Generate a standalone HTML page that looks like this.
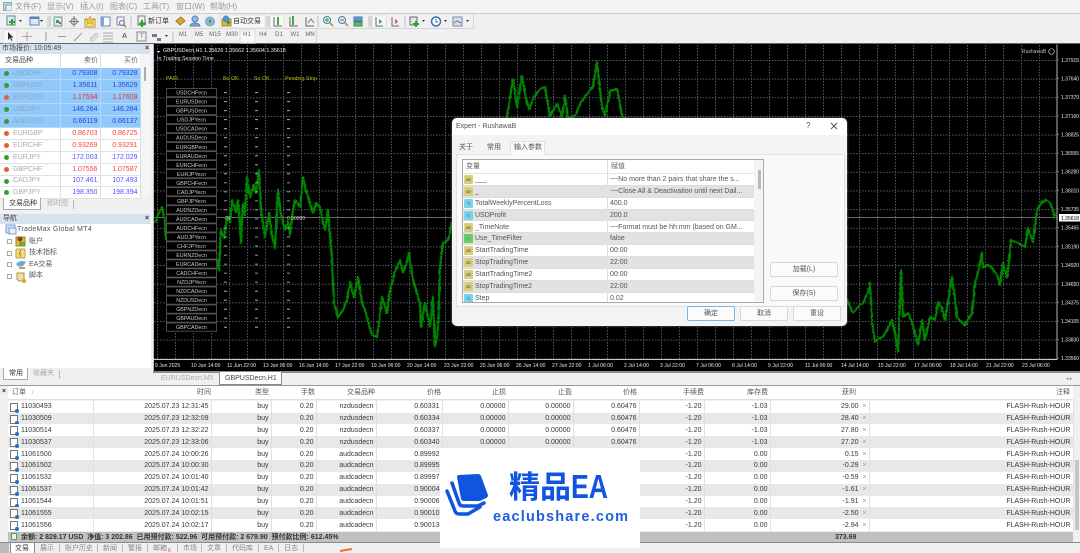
<!DOCTYPE html>
<html><head><meta charset="utf-8"><style>
html,body{margin:0;padding:0;width:1080px;height:553px;overflow:hidden;background:#f0f0f0}
#w{position:relative;width:1080px;height:553px;overflow:hidden;background:#f0f0f0;font:7px "Liberation Sans","Noto Sans CJK SC",sans-serif;color:#333;filter:blur(.3px)}
.a{position:absolute;white-space:nowrap}
.b{position:absolute}
table{position:absolute;border-collapse:collapse;table-layout:fixed;font-size:7px}
td{padding:0 1px;overflow:hidden;white-space:nowrap;text-align:right;box-sizing:border-box}
#mw td{height:11.9px;border-right:1px solid #ddd;border-bottom:1px solid #e2e2e2;padding:0 2px}
#mw td:first-child{text-align:left;color:#aaa;padding-left:13px;position:relative}
#mw tr.s td{background:#91c9fa;border-color:#b5d9f8}
#mw tr.s td:first-child{color:#8fa5bd}
.bl td{color:#5050ff}.re td{color:#ff4040}
.s.bl td{color:#2046e0}.s.re td{color:#f03030}
.ar{position:absolute;left:4px;top:3px;width:5px;height:5px;border-radius:50%;background:#3a9a3a}
.re .ar{background:#e0602a}
#tt td{height:11.87px;color:#383838;border-right:1px solid #e0e0e0;padding-right:2px}
#tt tr:nth-child(even) td{background:#e8e8e8}
#tt td:first-child{text-align:left;padding-left:13px;position:relative}
.doc{position:absolute;left:2px;top:2px;width:6px;height:7px;border:1px solid #777;background:#fff}
.doc:after{content:"";position:absolute;right:-2px;bottom:-2px;width:4px;height:4px;border-radius:50%;background:#1f72c8}
.hd{position:absolute;top:388px;line-height:10px;color:#555;transform:translateX(-100%);white-space:nowrap}
#dl{position:absolute;left:452px;top:118px;width:395px;height:208px;background:#f3f3f3;border-radius:5px;box-shadow:0 0 2px #777;overflow:hidden}
#pl{position:absolute;left:462px;top:159px;width:302px;height:144px;background:#fff;border:1px solid #a8a8a8;box-sizing:border-box;overflow:hidden}
.r{position:absolute;left:0;width:291px;height:11.87px;line-height:11.8px;color:#555;border-bottom:1px solid #ddd;box-sizing:border-box}
.r.g{background:#e2e2e2}
.r i{position:absolute;left:1px;top:1px;width:9px;height:9px;border-radius:1px;font:normal 4.5px/9px "Liberation Sans",sans-serif;text-align:center;color:#555}
.r .y{background:#d9cf78}.r .c{background:#78d2ea}.r .n{background:#66cc66}
.r span{position:absolute;left:12px}.r b{font-weight:normal;position:absolute;left:147px}
.btn{position:absolute;background:#fbfbfb;border:1px solid #d8d8d8;border-radius:2px;box-sizing:border-box;text-align:center;color:#555;font-size:7px;line-height:14px}
.t{position:absolute;top:544px;line-height:9px;color:#888}
.sp{position:absolute;top:544px;height:8px;width:1px;background:#bbb}
.m{position:absolute;top:7px;color:#999;font-size:8px;line-height:12px;transform:translateY(-6px)}
.tb{position:absolute;top:32px;color:#666;font-size:6px;width:14px;text-align:center}
</style></head><body><div id="w">

<div class="b" style="left:0;top:0;width:1080px;height:13px;background:#f3f3f3"></div>
<svg class="b" style="left:3px;top:2px" width="9" height="9"><rect x=".5" y=".5" width="8" height="8" fill="#bcd3ea" stroke="#8aa"/><rect x="3" y="3" width="6" height="6" fill="#e8f0f8" stroke="#8aa"/></svg>
<span class="m" style="left:15px">文件(F)</span><span class="m" style="left:47px">显示(V)</span><span class="m" style="left:80px">插入(I)</span><span class="m" style="left:110px">图表(C)</span><span class="m" style="left:143px">工具(T)</span><span class="m" style="left:176px">窗口(W)</span><span class="m" style="left:210px">帮助(H)</span>

<div class="b" style="left:0;top:13px;width:1080px;height:1px;background:#cfcfcf"></div>
<div class="b" style="left:0;top:28px;width:473px;height:1px;background:#d5d5d5"></div>
<div class="b" style="left:473px;top:14px;width:1px;height:15px;background:#d5d5d5"></div>
<div class="b" style="left:316px;top:29px;width:1px;height:14px;background:#d5d5d5"></div>
<div class="b" style="left:0;top:43px;width:1080px;height:1px;background:#666"></div>

<svg class="b" style="left:0;top:14px" width="480" height="30" fill="none" stroke-width="1">
<g fill="#f8f8f8" stroke="#e0e0e0"><rect x="51" y="1" width="14" height="13"/><rect x="98" y="1" width="14" height="13"/><rect x="220" y="1" width="45" height="13"/><rect x="270" y="1" width="14" height="13"/><rect x="372" y="1" width="14" height="13"/><rect x="3" y="16" width="14" height="13"/><rect x="240" y="16" width="15" height="13"/></g>
<g stroke="#c0c0c0"><path d="M48 2V13M50 2V13M131 2V13M267 2V13M269 2V13M318 2V13M369 2V13M371 2V13M405 2V13M173 17V28"/></g>
<g fill="#333"><path d="M19 6h3l-1.500 2zM40 6h3l-1.500 2zM422 6h3l-1.500 2zM444 6h3l-1.500 2zM466 6h3l-1.500 2zM165 21h3l-1.500 2z"/></g>
<rect x="7" y="2" width="8" height="9" fill="#dfe9f5" stroke="#6a7f99"/><path d="M12 5v6M9 8h6" stroke="#22aa22" stroke-width="2"/>
<rect x="30" y="3" width="9" height="8" fill="#dfe9f5" stroke="#5c82b5"/><rect x="30" y="3" width="9" height="2" fill="#5c82b5"/>
<rect x="54" y="3" width="8" height="9" fill="#e0f0e0" stroke="#6a8a9a"/><rect x="56" y="6" width="3" height="3" fill="#22aa44"/><rect x="59" y="8" width="2" height="2" fill="#dd4422"/>
<path d="M74 2V13M69 7.500H79" stroke="#777"/><circle cx="74" cy="7.500" r="3" stroke="#777"/>
<path d="M85 5h10v8H85z" fill="#f5e08a" stroke="#b09a40"/><path d="M90 2l1.500 3 3 .5-2 2 .5 3-3-1.500-3 1.500.5-3-2-2 3-.5z" fill="#f0c830" stroke="#b09030" stroke-width=".5"/>
<rect x="101" y="3" width="9" height="9" fill="#fff" stroke="#5c82b5"/><rect x="101" y="3" width="3" height="9" fill="#7da8d8"/>
<rect x="117" y="3" width="7" height="8" fill="#eef" stroke="#88a"/><circle cx="122" cy="9" r="2.500" stroke="#777"/><path d="M124 11l2 2" stroke="#a08030" stroke-width="1.500"/>
<rect x="138" y="2" width="7" height="9" fill="#eee" stroke="#778"/><path d="M142 6v7M139 9.500h7" stroke="#22aa22" stroke-width="2"/>
<path d="M176 7l5-4 4 4-5 4z" fill="#d8a830" stroke="#a07820"/>
<circle cx="195" cy="5" r="3" fill="#8fb8e6" stroke="#5a80b0"/><path d="M190 12c1-4 9-4 10 0z" fill="#7da8d8" stroke="#5a80b0"/>
<circle cx="210" cy="7.500" r="4.500" fill="#8fb8d8" stroke="#78a0c0"/><path d="M209 5l3 2-3 3" fill="#4aa04a"/>
<rect x="222" y="5" width="9" height="7" fill="#e0b040" stroke="#b08820"/><circle cx="226" cy="5" r="3.500" fill="#5a90c8"/><path d="M227 6v5l4-2.500z" fill="#22aa22"/>
<g stroke="#667"><path d="M274 3v9h8"/><path d="M290 3v9h8"/><path d="M306 3v9h8"/></g><path d="M278 3v8M293 2v9" stroke="#44aa44" stroke-width="2"/><path d="M308 9l3-4 3 4" stroke="#668a66"/>
<g fill="#dcecf8" stroke="#4a80b0"><circle cx="327" cy="6" r="3.500"/><circle cx="342" cy="6" r="3.500"/></g><path d="M330 9l3 3M345 9l3 3" stroke="#b08830" stroke-width="1.500"/><path d="M325 6h4M327 4v4" stroke="#22aa22"/><path d="M340 6h4" stroke="#dd4433"/>
<rect x="354" y="3" width="8" height="4" fill="#5a9adf" stroke="#4a7ab0"/><rect x="354" y="8" width="8" height="4" fill="#5abf6a" stroke="#3a8a4a"/>
<path d="M376 3v9h7M392 3v9h7" stroke="#667"/><path d="M379 5v5l3-2.500z" fill="#33aa33"/><path d="M395 5v5l3-2.500z" fill="#dd5533"/>
<rect x="410" y="3" width="7" height="8" fill="#e4e4e4" stroke="#667"/><path d="M416 7v6M413 10h6" stroke="#22aa22" stroke-width="2"/>
<circle cx="436" cy="7.500" r="4.500" fill="#fff" stroke="#2a70c0" stroke-width="1.500"/><path d="M436 5v3h2" stroke="#333" stroke-width=".7"/>
<rect x="453" y="3" width="9" height="9" fill="#cfe0f4" stroke="#6a90c0"/><path d="M454 9l3-2 4 2" stroke="#d06030"/>
<path d="M8 18v8l2-2 1.500 3 1-.5-1.500-3h2.500z" fill="#333"/><path d="M27 18v9M22 22.500h10" stroke="#aaa"/>
<path d="M46 18v9" stroke="#999"/><path d="M58 22.500h8" stroke="#999"/><path d="M74 27l8-8" stroke="#999"/>
<path d="M90 27l8-8M92 28l6-6M90 25l6-6" stroke="#999" stroke-dasharray="1 1"/><path d="M103 19h10M103 22h10M103 25h10M103 28h10" stroke="#aaa"/>
<rect x="137" y="18" width="9" height="9" stroke="#888"/><path d="M152 20h5v3h-5zM157 24h4v3h-4z" fill="#778"/>
</svg>
<span class="a" style="left:148px;top:17px;color:#333;font-size:7px;line-height:9px">新订单</span>
<span class="a" style="left:233px;top:17px;color:#333;font-size:7px;line-height:9px">自动交易</span>
<span class="a" style="left:122px;top:33px;color:#666;font-weight:bold;line-height:8px">A</span>
<span class="a" style="left:140px;top:33px;color:#666;font-size:6px;line-height:8px">T</span>
<span class="tb" style="left:176px">M1</span><span class="tb" style="left:192px">M5</span><span class="tb" style="left:208px">M15</span><span class="tb" style="left:225px">M30</span><span class="tb" style="left:240px">H1</span><span class="tb" style="left:256px">H4</span><span class="tb" style="left:272px">D1</span><span class="tb" style="left:288px">W1</span><span class="tb" style="left:303px">MN</span>

<!-- Market watch -->
<div class="b" style="left:0;top:44px;width:150px;height:10px;background:#d6e2ee"></div>
<span class="a" style="left:2px;top:45px;line-height:8px;color:#444">市场报价: 10:05:49</span>
<span class="a" style="left:145px;top:45px;line-height:8px;color:#333;font-weight:bold">×</span>
<div class="b" style="left:0;top:54px;width:150px;height:144px;background:#f4f4f4"></div>
<div class="b" style="left:0;top:54px;width:140px;height:14px;background:#fff"></div>
<span class="a" style="left:5px;top:57px;line-height:8px;color:#444">交易品种</span><span class="a" style="left:84px;top:57px;line-height:8px;color:#666">卖价</span><span class="a" style="left:124px;top:57px;line-height:8px;color:#666">买价</span>
<div class="b" style="left:60px;top:54px;width:1px;height:14px;background:#ddd"></div><div class="b" style="left:100px;top:54px;width:1px;height:14px;background:#ddd"></div>
<div class="b" style="left:144px;top:67px;width:2px;height:14px;background:#aaa"></div>
<table id="mw" style="left:0;top:68px;width:140px;background:#fff"><colgroup><col style="width:60px"><col style="width:40px"><col style="width:40px"></colgroup>
<tr class="s bl"><td><i class="ar"></i>USDCHF</td><td>0.79308</td><td>0.79328</td></tr>
<tr class="s bl"><td><i class="ar"></i>GBPUSD</td><td>1.35611</td><td>1.35629</td></tr>
<tr class="s re"><td><i class="ar"></i>EURUSD</td><td>1.17594</td><td>1.17609</td></tr>
<tr class="s bl"><td><i class="ar"></i>USDJPY</td><td>146.264</td><td>146.284</td></tr>
<tr class="s bl"><td><i class="ar"></i>AUDUSD</td><td>0.66119</td><td>0.66137</td></tr>
<tr class="re"><td><i class="ar"></i>EURGBP</td><td>0.86703</td><td>0.86725</td></tr>
<tr class="re"><td><i class="ar"></i>EURCHF</td><td>0.93269</td><td>0.93291</td></tr>
<tr class="bl"><td><i class="ar"></i>EURJPY</td><td>172.003</td><td>172.029</td></tr>
<tr class="re"><td><i class="ar"></i>GBPCHF</td><td>1.07556</td><td>1.07587</td></tr>
<tr class="bl"><td><i class="ar"></i>CADJPY</td><td>107.461</td><td>107.493</td></tr>
<tr class="bl"><td><i class="ar"></i>GBPJPY</td><td>198.350</td><td>198.394</td></tr>
</table>
<div class="b" style="left:3px;top:198px;width:38px;height:12px;background:#fff;border:1px solid #aaa;border-top:0;box-sizing:border-box"></div>
<span class="a" style="left:9px;top:200px;line-height:8px;color:#333">交易品种</span><span class="a" style="left:47px;top:200px;line-height:8px;color:#aaa">即时图</span>
<div class="b" style="left:73px;top:200px;width:1px;height:9px;background:#bbb"></div>

<!-- Navigator -->
<div class="b" style="left:0;top:214px;width:150px;height:10px;background:#d6e2ee"></div>
<span class="a" style="left:3px;top:215px;line-height:8px;color:#444">导航</span><span class="a" style="left:145px;top:215px;line-height:8px;font-weight:bold">×</span>
<div class="b" style="left:0;top:224px;width:151px;height:144px;background:#fff"></div>
<svg class="b" style="left:4px;top:224px" width="30" height="62" fill="none">
<rect x="2" y="1" width="9" height="8" fill="#cfe0f4" stroke="#7aa0cc"/><rect x="5" y="4" width="7" height="6" fill="#e8f0fa" stroke="#7aa0cc"/>
<g stroke="#aaa" fill="#fff"><rect x="3.500" y="15.500" width="4" height="4"/><rect x="3.500" y="27.500" width="4" height="4"/><rect x="3.500" y="38.500" width="4" height="4"/><rect x="3.500" y="50.500" width="4" height="4"/></g>
<rect x="12" y="13" width="9" height="9" fill="#e8b830" stroke="#a08020"/><circle cx="16" cy="15" r="2.500" fill="#6a5020"/><rect x="15" y="18" width="6" height="4" fill="#66aa44"/>
<rect x="12" y="25" width="9" height="9" rx="1" fill="#f0e080" stroke="#c0a040"/><path d="M17 26l-2 4h2l-1 3" stroke="#c08020"/>
<path d="M12 40c2-3 7-4 10-2l-3 4c-3 1-5 1-7-2z" fill="#6aa8e0"/><path d="M15 44h6" stroke="#d0a030" stroke-width="2"/>
<path d="M13 49h7v8h-5l-2-2z" fill="#f0e0a0" stroke="#b09050"/><circle cx="20" cy="57" r="2" fill="#d8a830"/>
</svg>
<span class="a" style="left:17px;top:225px;line-height:9px;color:#555;letter-spacing:.3px">TradeMax Global MT4</span>
<span class="a" style="left:29px;top:237px;line-height:9px;color:#555">账户</span><span class="a" style="left:29px;top:248px;line-height:9px;color:#555">技术指标</span><span class="a" style="left:29px;top:260px;line-height:9px;color:#555">EA交易</span><span class="a" style="left:29px;top:271px;line-height:9px;color:#555">脚本</span>
<div class="b" style="left:3px;top:368px;width:25px;height:12px;background:#fff;border:1px solid #aaa;border-top:0;box-sizing:border-box"></div>
<span class="a" style="left:9px;top:370px;line-height:8px;color:#333">常用</span><span class="a" style="left:33px;top:370px;line-height:8px;color:#aaa">收藏夹</span>
<div class="b" style="left:59px;top:370px;width:1px;height:9px;background:#bbb"></div>

<!-- Chart -->
<svg class="b" style="left:153px;top:44px;background:#000" width="927" height="327" viewBox="153 44 927 327" font-family="Liberation Sans" font-size="5.2" fill="#e8e8e8">
<defs>
<pattern id="v" patternUnits="userSpaceOnUse" x="157" y="45" width="18" height="3"><rect width="1" height="1.500" fill="#555b66"/></pattern>
<pattern id="h" patternUnits="userSpaceOnUse" x="157" y="60" width="3" height="18.640"><rect width="1.500" height="1" fill="#555b66"/></pattern>
<filter id="jag" filterUnits="userSpaceOnUse" x="153" y="44" width="910" height="327"><feTurbulence type="fractalNoise" baseFrequency=".4" numOctaves="2" seed="4"/><feDisplacementMap in="SourceGraphic" scale="2.500" xChannelSelector="R" yChannelSelector="G"/></filter>
</defs>
<rect x="154" y="45" width="903" height="314" fill="url(#v)"/><rect x="154" y="45" width="903" height="314" fill="url(#h)"/>
<rect x="153" y="44" width="1" height="327" fill="#bbb"/>
<path d="M154 217.500H1057" stroke="#8a8a8a" stroke-width=".8"/>
<g fill="none" stroke="#008400" stroke-width="2.300" stroke-linejoin="round" filter="url(#jag)">
<polyline points="155,223 158,215 162,207 165,222 166,240 168,225 172,240 180,235 190,240 200,245 217,260 219,270 221,230 224,238 227,217 230,222 232,200 236,212 238,200 240,225 241,243 243,203 245,215 247,177 250,197 254,185 256,193 259,170 261,210 265,237 267,225 269,213 272,235 275,248 278,190 281,215 285,230 288,222 290,235 293,210 295,200 300,207 303,177 306,190 308,197 313,213 316,203 320,207 323,222 325,230 328,210 332,260 334,303 338,317 343,310 347,300 350,282 354,297 358,277 362,303 365,310 367,317 370,328 372,335 377,337 380,315 382,297 387,313 390,290 395,272 400,260 403,273 406,265 409,253 413,280 420,303 421,327 425,303 430,327 433,297 435,347 438,330 440,267 443,243 448,240 452,223 470,200 490,170 507,116 513,79 517,107 522,76 526,98 529,109 534,97 540,89 545,87 550,116 557,104 562,116 565,96 568,118 575,116 581,102 587,94 593,87 597,62 602,107 605,116 610,91 617,89 622,116 700,210 800,280 847,300 850,307 853,313 858,307 863,303 868,292 870,283 872,323 875,342 879,338 883,337 888,328 892,320 895,333 898,352 901,270 903,317 908,313 912,322 915,333 918,345 922,320 925,340 930,317 935,320 938,302 942,308 945,320 949,295 952,277 955,300 957,317 961,322 965,325 972,313 975,283 979,268 982,253 983,267 988,265 992,268 997,275 1000,285 1003,263 1007,278 1011,240 1018,243 1025,247 1028,228 1033,242 1037,210 1042,202 1046,200 1050,202 1053,210 1055,218"/>
</g>
<path d="M1057 44.500V359.500H153" stroke="#c8c8c8" stroke-width=".9" fill="none"/>
<g stroke="#aaa" stroke-width=".6" fill="none"><path d="M1057 60h2M1057 78.700h2M1057 97h2M1057 116h2M1057 134.700h2M1057 153h2M1057 171.700h2M1057 190.700h2M1057 209h2M1057 227.700h2M1057 246.700h2M1057 265h2M1057 284h2M1057 302.700h2M1057 321h2M1057 339.700h2M1057 358h2"/></g>
<path d="M157 51l3 0-1.500 2z" fill="#fff"/>
<text x="163" y="52" font-size="5.350" fill="#eee">GBPUSDecn,H1  1.35626 1.35662 1.35604 1.35618</text>
<text x="157" y="60" font-size="5.300" fill="#ddd">In Trading Session Time</text>
<g fill="#b8b800" font-size="5.300"><text x="166" y="80">PAIR</text><text x="223" y="80">Bo OK</text><text x="254" y="80">So OK</text><text x="285" y="80">Pending Stop</text></g>
<g fill="#000" stroke="#5a5a5a" stroke-width=".8">
<rect x="166.500" y="88.500" width="50" height="8.200"/><rect x="166.500" y="97.500" width="50" height="8.200"/><rect x="166.500" y="106.500" width="50" height="8.200"/><rect x="166.500" y="115.500" width="50" height="8.200"/><rect x="166.500" y="124.500" width="50" height="8.200"/><rect x="166.500" y="133.500" width="50" height="8.200"/><rect x="166.500" y="142.600" width="50" height="8.200"/><rect x="166.500" y="151.600" width="50" height="8.200"/><rect x="166.500" y="160.600" width="50" height="8.200"/><rect x="166.500" y="169.600" width="50" height="8.200"/><rect x="166.500" y="178.700" width="50" height="8.200"/><rect x="166.500" y="187.700" width="50" height="8.200"/><rect x="166.500" y="196.700" width="50" height="8.200"/><rect x="166.500" y="205.700" width="50" height="8.200"/><rect x="166.500" y="214.800" width="50" height="8.200"/><rect x="166.500" y="223.800" width="50" height="8.200"/><rect x="166.500" y="232.800" width="50" height="8.200"/><rect x="166.500" y="241.800" width="50" height="8.200"/><rect x="166.500" y="250.900" width="50" height="8.200"/><rect x="166.500" y="259.900" width="50" height="8.200"/><rect x="166.500" y="268.900" width="50" height="8.200"/><rect x="166.500" y="277.900" width="50" height="8.200"/><rect x="166.500" y="287" width="50" height="8.200"/><rect x="166.500" y="296" width="50" height="8.200"/><rect x="166.500" y="305" width="50" height="8.200"/><rect x="166.500" y="314" width="50" height="8.200"/><rect x="166.500" y="323" width="50" height="8.200"/>
</g>
<g fill="#ccc" font-size="5.300" text-anchor="middle">
<text x="191.500" y="94.700">USDCHFecn</text><text x="191.500" y="103.700">EURUSDecn</text><text x="191.500" y="112.700">GBPUSDecn</text><text x="191.500" y="121.700">USDJPYecn</text><text x="191.500" y="130.700">USDCADecn</text><text x="191.500" y="139.700">AUDUSDecn</text><text x="191.500" y="148.800">EURGBPecn</text><text x="191.500" y="157.800">EURAUDecn</text><text x="191.500" y="166.800">EURCHFecn</text><text x="191.500" y="175.800">EURJPYecn</text><text x="191.500" y="184.900">GBPCHFecn</text><text x="191.500" y="193.900">CADJPYecn</text><text x="191.500" y="202.900">GBPJPYecn</text><text x="191.500" y="211.900">AUDNZDecn</text><text x="191.500" y="221">AUDCADecn</text><text x="191.500" y="230">AUDCHFecn</text><text x="191.500" y="239">AUDJPYecn</text><text x="191.500" y="248">CHFJPYecn</text><text x="191.500" y="257.100">EURNZDecn</text><text x="191.500" y="266.100">EURCADecn</text><text x="191.500" y="275.100">CADCHFecn</text><text x="191.500" y="284.100">NZDJPYecn</text><text x="191.500" y="293.200">NZDCADecn</text><text x="191.500" y="302.200">NZDUSDecn</text><text x="191.500" y="311.200">GBPNZDecn</text><text x="191.500" y="320.200">GBPAUDecn</text><text x="191.500" y="329.200">GBPCADecn</text>
</g>
<path d="M224 92.700h3M224 101.700h3M224 110.700h3M224 119.700h3M224 128.700h3M224 137.700h3M224 146.800h3M224 155.800h3M224 164.800h3M224 173.800h3M224 182.900h3M224 191.900h3M224 200.900h3M224 209.900h3M224 228h3M224 237h3M224 246h3M224 255.100h3M224 264.100h3M224 273.100h3M224 282.100h3M224 291.200h3M224 300.200h3M224 309.200h3M224 318.200h3M224 327.200h3" stroke="#ccc" stroke-width=".8"/>
<path d="M255 92.700h3M255 101.700h3M255 110.700h3M255 119.700h3M255 128.700h3M255 137.700h3M255 146.800h3M255 155.800h3M255 164.800h3M255 173.800h3M255 182.900h3M255 191.900h3M255 200.900h3M255 209.900h3M255 219h3M255 228h3M255 237h3M255 246h3M255 255.100h3M255 264.100h3M255 273.100h3M255 282.100h3M255 291.200h3M255 300.200h3M255 309.200h3M255 318.200h3M255 327.200h3" stroke="#ccc" stroke-width=".8"/>
<path d="M287 92.700h3M287 101.700h3M287 110.700h3M287 119.700h3M287 128.700h3M287 137.700h3M287 146.800h3M287 155.800h3M287 164.800h3M287 173.800h3M287 182.900h3M287 191.900h3M287 200.900h3M287 209.900h3M287 228h3M287 237h3M287 246h3M287 255.100h3M287 264.100h3M287 273.100h3M287 282.100h3M287 291.200h3M287 300.200h3M287 309.200h3M287 318.200h3M287 327.200h3" stroke="#ccc" stroke-width=".8"/>
<text x="225" y="220" fill="#bbb" font-size="5">0¥</text><text x="287" y="220" fill="#ccc" font-size="5">0.90000</text>
<text x="1022" y="53" fill="#bbb" font-size="5">RushawaB</text><circle cx="1051.500" cy="51.500" r="2.800" fill="none" stroke="#bbb" stroke-width=".7"/>
<g font-size="5" fill="#e8e8e8"><text x="1061" y="62">1.37915</text><text x="1061" y="80.700">1.37640</text><text x="1061" y="99">1.37370</text><text x="1061" y="118">1.37100</text><text x="1061" y="136.700">1.36825</text><text x="1061" y="155">1.36555</text><text x="1061" y="173.700">1.36280</text><text x="1061" y="192.700">1.36010</text><text x="1061" y="211">1.35735</text><text x="1061" y="229.700">1.35465</text><text x="1061" y="248.700">1.35190</text><text x="1061" y="267">1.34920</text><text x="1061" y="286">1.34650</text><text x="1061" y="304.700">1.34375</text><text x="1061" y="323">1.34105</text><text x="1061" y="341.700">1.33830</text><text x="1061" y="360">1.33560</text></g>
<rect x="1059" y="214" width="21" height="7.500" fill="#fff"/><text x="1061" y="220" font-size="5" fill="#000">1.35618</text>
<g font-size="5.100" fill="#e8e8e8"><text x="155" y="367">9 Jun 2025</text><text x="191" y="367">10 Jun 14:00</text><text x="227" y="367">11 Jun 22:00</text><text x="263" y="367">13 Jun 06:00</text><text x="299" y="367">16 Jun 14:00</text><text x="335" y="367">17 Jun 22:00</text><text x="371" y="367">19 Jun 06:00</text><text x="407" y="367">20 Jun 14:00</text><text x="444" y="367">23 Jun 22:00</text><text x="480" y="367">25 Jun 06:00</text><text x="516" y="367">26 Jun 14:00</text><text x="552" y="367">27 Jun 22:00</text><text x="588" y="367">1 Jul 06:00</text><text x="624" y="367">2 Jul 14:00</text><text x="660" y="367">3 Jul 22:00</text><text x="696" y="367">7 Jul 06:00</text><text x="732" y="367">8 Jul 14:00</text><text x="768" y="367">9 Jul 22:00</text><text x="805" y="367">11 Jul 06:00</text><text x="841" y="367">14 Jul 14:00</text><text x="878" y="367">15 Jul 22:00</text><text x="914" y="367">17 Jul 06:00</text><text x="950" y="367">18 Jul 14:00</text><text x="986" y="367">21 Jul 22:00</text><text x="1022" y="367">23 Jul 06:00</text></g>
</svg>
<div class="b" style="left:153px;top:371px;width:927px;height:1.500px;background:#8a8a8a"></div>
<div class="b" style="left:219px;top:372px;width:63px;height:13px;background:#fff;border:1px solid #888;border-top:0;box-sizing:border-box"></div>
<span class="a" style="left:161px;top:375px;line-height:8px;color:#aaa">EURUSDecn,M5</span><span class="a" style="left:225px;top:375px;line-height:8px;color:#444">GBPUSDecn,H1</span>
<span class="a" style="left:1066px;top:376px;line-height:6px;color:#888;font-size:5px">◂  ▸</span>

<!-- Terminal -->
<div class="b" style="left:0;top:385px;width:1080px;height:1px;background:#999"></div>
<div class="b" style="left:8px;top:386px;width:1065px;height:14px;background:#fff;border-bottom:1px solid #ddd;box-sizing:border-box"></div>
<span class="a" style="left:2px;top:388px;line-height:8px;font-weight:bold">×</span>
<span class="a" style="left:12px;top:388px;line-height:10px;color:#555">订单</span><span class="a" style="left:32px;top:388px;line-height:10px;color:#999;font-size:5px">/</span>
<span class="hd" style="left:211px">时间</span><span class="hd" style="left:269px">类型</span><span class="hd" style="left:315px">手数</span><span class="hd" style="left:375px">交易品种</span><span class="hd" style="left:441px">价格</span><span class="hd" style="left:506px">止损</span><span class="hd" style="left:572px">止盈</span><span class="hd" style="left:637px">价格</span><span class="hd" style="left:704px">手续费</span><span class="hd" style="left:768px">库存费</span><span class="hd" style="left:856px">获利</span><span class="hd" style="left:1070px">注释</span>
<table id="tt" style="left:8px;top:400.700px;width:1065px;background:#fff"><colgroup><col style="width:85px"><col style="width:118px"><col style="width:60px"><col style="width:45px"><col style="width:60px"><col style="width:66px"><col style="width:66px"><col style="width:65px"><col style="width:66px"><col style="width:65px"><col style="width:66px"><col style="width:99px"><col style="width:204px"></colgroup>
<tr><td><i class="doc"></i>11030493</td><td>2025.07.23 12:31:45</td><td>buy</td><td>0.20</td><td>nzdusdecn</td><td>0.60331</td><td>0.00000</td><td>0.00000</td><td>0.60476</td><td>-1.20</td><td>-1.03</td><td>29.00 &nbsp;<span style="color:#999">×</span></td><td>FLASH-Rush-HOUR</td></tr>
<tr><td><i class="doc"></i>11030509</td><td>2025.07.23 12:32:09</td><td>buy</td><td>0.20</td><td>nzdusdecn</td><td>0.60334</td><td>0.00000</td><td>0.00000</td><td>0.60476</td><td>-1.20</td><td>-1.03</td><td>28.40 &nbsp;<span style="color:#999">×</span></td><td>FLASH-Rush-HOUR</td></tr>
<tr><td><i class="doc"></i>11030514</td><td>2025.07.23 12:32:22</td><td>buy</td><td>0.20</td><td>nzdusdecn</td><td>0.60337</td><td>0.00000</td><td>0.00000</td><td>0.60476</td><td>-1.20</td><td>-1.03</td><td>27.80 &nbsp;<span style="color:#999">×</span></td><td>FLASH-Rush-HOUR</td></tr>
<tr><td><i class="doc"></i>11030537</td><td>2025.07.23 12:33:06</td><td>buy</td><td>0.20</td><td>nzdusdecn</td><td>0.60340</td><td>0.00000</td><td>0.00000</td><td>0.60476</td><td>-1.20</td><td>-1.03</td><td>27.20 &nbsp;<span style="color:#999">×</span></td><td>FLASH-Rush-HOUR</td></tr>
<tr><td><i class="doc"></i>11061500</td><td>2025.07.24 10:00:26</td><td>buy</td><td>0.20</td><td>audcadecn</td><td>0.89992</td><td>0.00000</td><td>0.00000</td><td>0.90052</td><td>-1.20</td><td>0.00</td><td>0.15 &nbsp;<span style="color:#999">×</span></td><td>FLASH-Rush-HOUR</td></tr>
<tr><td><i class="doc"></i>11061502</td><td>2025.07.24 10:00:30</td><td>buy</td><td>0.20</td><td>audcadecn</td><td>0.89995</td><td>0.00000</td><td>0.00000</td><td>0.90052</td><td>-1.20</td><td>0.00</td><td>-0.29 &nbsp;<span style="color:#999">×</span></td><td>FLASH-Rush-HOUR</td></tr>
<tr><td><i class="doc"></i>11061532</td><td>2025.07.24 10:01:40</td><td>buy</td><td>0.20</td><td>audcadecn</td><td>0.89997</td><td>0.00000</td><td>0.00000</td><td>0.90052</td><td>-1.20</td><td>0.00</td><td>-0.59 &nbsp;<span style="color:#999">×</span></td><td>FLASH-Rush-HOUR</td></tr>
<tr><td><i class="doc"></i>11061537</td><td>2025.07.24 10:01:42</td><td>buy</td><td>0.20</td><td>audcadecn</td><td>0.90004</td><td>0.00000</td><td>0.00000</td><td>0.90052</td><td>-1.20</td><td>0.00</td><td>-1.61 &nbsp;<span style="color:#999">×</span></td><td>FLASH-Rush-HOUR</td></tr>
<tr><td><i class="doc"></i>11061544</td><td>2025.07.24 10:01:51</td><td>buy</td><td>0.20</td><td>audcadecn</td><td>0.90006</td><td>0.00000</td><td>0.00000</td><td>0.90052</td><td>-1.20</td><td>0.00</td><td>-1.91 &nbsp;<span style="color:#999">×</span></td><td>FLASH-Rush-HOUR</td></tr>
<tr><td><i class="doc"></i>11061555</td><td>2025.07.24 10:02:15</td><td>buy</td><td>0.20</td><td>audcadecn</td><td>0.90010</td><td>0.00000</td><td>0.00000</td><td>0.90052</td><td>-1.20</td><td>0.00</td><td>-2.50 &nbsp;<span style="color:#999">×</span></td><td>FLASH-Rush-HOUR</td></tr>
<tr><td><i class="doc"></i>11061556</td><td>2025.07.24 10:02:17</td><td>buy</td><td>0.20</td><td>audcadecn</td><td>0.90013</td><td>0.00000</td><td>0.00000</td><td>0.90052</td><td>-1.20</td><td>0.00</td><td>-2.94 &nbsp;<span style="color:#999">×</span></td><td>FLASH-Rush-HOUR</td></tr>
</table>
<div class="b" style="left:1074px;top:400px;width:6px;height:131px;background:#f0f0f0"></div>
<div class="b" style="left:1075px;top:460px;width:4px;height:70px;background:#c4c4c4"></div>
<div class="b" style="left:8px;top:531.500px;width:1065px;height:10.500px;background:#c0c0c0"></div>
<div class="b" style="left:0;top:542px;width:1080px;height:1px;background:#8a8a8a"></div>
<div class="b" style="left:11px;top:533px;width:6px;height:7px;background:#e8f5e8;border:1px solid #5a9a5a;box-sizing:border-box"></div>
<span class="a" style="left:21px;top:532.500px;line-height:9px;font-weight:bold;color:#333">余额: 2 829.17 USD &nbsp;净值: 3 202.86 &nbsp;已用预付款: 522.96 &nbsp;可用预付款: 2 679.90 &nbsp;预付款比例: 612.45%</span>
<span class="a" style="left:835px;top:532.500px;line-height:9px;font-weight:bold;color:#333">373.69</span>

<div class="b" style="left:0;top:543px;width:9px;height:10px;background:#bbb"></div>
<div class="b" style="left:10px;top:543px;width:25px;height:10px;background:#fff;border-left:1px solid #888;border-right:1px solid #888;box-sizing:border-box"></div>
<span class="t" style="left:15px;color:#333">交易</span><span class="t" style="left:40px">展示</span><i class="sp" style="left:59px"></i><span class="t" style="left:65px">账户历史</span><i class="sp" style="left:97px"></i><span class="t" style="left:103px">新闻</span><i class="sp" style="left:122px"></i><span class="t" style="left:128px">警报</span><i class="sp" style="left:147px"></i><span class="t" style="left:153px">邮箱</span><span class="a" style="left:168px;top:548px;color:#e04040;font-size:5px">6</span><i class="sp" style="left:177px"></i><span class="t" style="left:183px">市场</span><i class="sp" style="left:201px"></i><span class="t" style="left:207px">文章</span><i class="sp" style="left:226px"></i><span class="t" style="left:232px">代码库</span><i class="sp" style="left:258px"></i><span class="t" style="left:264px">EA</span><i class="sp" style="left:278px"></i><span class="t" style="left:284px">日志</span><i class="sp" style="left:303px"></i>
<div class="b" style="left:340px;top:549px;width:12px;height:2px;background:#f07020;transform:rotate(-10deg)"></div>

<!-- Dialog -->
<div id="dl"><div class="b" style="left:0;top:0;width:395px;height:17px;background:#fff"></div></div>
<span class="a" style="left:456px;top:122px;line-height:9px;color:#555;font-size:7px">Expert - RushawaB</span>
<span class="a" style="left:806px;top:121px;line-height:10px;color:#555;font-size:8px">?</span>
<svg class="b" style="left:830px;top:122px" width="8" height="8"><path d="M1 1l6 6M7 1l-6 6" stroke="#555"/></svg>
<div class="b" style="left:456px;top:154px;width:389px;height:153px;background:#f9f9f9;border:1px solid #e2e2e2;box-sizing:border-box"></div>
<div class="b" style="left:510px;top:141px;width:35px;height:14px;background:#f9f9f9;border:1px solid #e2e2e2;border-bottom:0;box-sizing:border-box"></div>
<span class="a" style="left:459px;top:143px;line-height:10px;color:#555">关于</span><span class="a" style="left:487px;top:143px;line-height:10px;color:#555">常用</span><span class="a" style="left:514px;top:143px;line-height:10px;color:#555">输入参数</span>
<div id="pl">
<div class="b" style="left:0;top:0;width:291px;height:14px;background:#fff;border-bottom:1px solid #e4e4e4;box-sizing:border-box"></div>
<span class="a" style="left:3px;top:2px;line-height:10px;color:#666">变量</span><span class="a" style="left:148px;top:2px;line-height:10px;color:#666">赋值</span>
<div class="b" style="left:144px;top:0;width:1px;height:144px;background:#ddd"></div>
<div class="r" style="top:14px"><i class="y">ab</i><span>___</span><b>~~No more than 2 pairs that share the s...</b></div>
<div class="r g" style="top:25.900px"><i class="y">ab</i><span>_</span><b>~~Close All &amp; Deactivation until next Dail...</b></div>
<div class="r" style="top:37.700px"><i class="c">½</i><span>TotalWeeklyPercentLoss</span><b>400.0</b></div>
<div class="r g" style="top:49.600px"><i class="c">½</i><span>USDProfit</span><b>200.0</b></div>
<div class="r" style="top:61.500px"><i class="y">ab</i><span>_TimeNote</span><b>~~Format must be hh:mm (based on GM...</b></div>
<div class="r g" style="top:73.300px"><i class="n">~</i><span>Use_TimeFilter</span><b>false</b></div>
<div class="r" style="top:85.200px"><i class="y">ab</i><span>StartTradingTime</span><b>00:00</b></div>
<div class="r g" style="top:97.100px"><i class="y">ab</i><span>StopTradingTime</span><b>22:00</b></div>
<div class="r" style="top:108.900px"><i class="y">ab</i><span>StartTradingTime2</span><b>00:00</b></div>
<div class="r g" style="top:120.800px"><i class="y">ab</i><span>StopTradingTime2</span><b>22:00</b></div>
<div class="r" style="top:132.700px"><i class="c">½</i><span>Step</span><b>0.02</b></div>
<div class="b" style="left:291px;top:0;width:10px;height:144px;background:#f4f4f4"></div>
<div class="b" style="left:295px;top:10px;width:3px;height:19px;background:#b8b8b8"></div>
</div>
<div class="btn" style="left:770px;top:262px;width:68px;height:15px">加载(L)</div>
<div class="btn" style="left:770px;top:286px;width:68px;height:15px">保存(S)</div>
<div class="btn" style="left:687px;top:306px;width:48px;height:15px;border-color:#7ab4e0">确定</div>
<div class="btn" style="left:740px;top:306px;width:48px;height:15px">取消</div>
<div class="btn" style="left:793px;top:306px;width:48px;height:15px">重设</div>

<!-- Watermark -->
<div class="b" style="left:440px;top:448px;width:200px;height:100px;background:#fff"></div>
<svg class="b" style="left:440px;top:448px" width="200" height="100" viewBox="440 448 200 100">
<path d="M457 477q0-2 2-2l19-1q2 0 3 2l7 19q0 2-2 3l-4 2q-1 1-3 1h-15q-2 0-3-2z" fill="#0f55e0"/>
<g fill="none" stroke="#0f55e0" stroke-width="3.500" stroke-linejoin="round" stroke-linecap="round"><path d="M452 483l7 20q1 3 4 3h15l6-3"/><path d="M447 491l8 20q1 3 4 3h9l12-7"/></g>
<text x="509" y="498" font-family="Noto Sans CJK SC,sans-serif" font-weight="700" font-size="31" fill="#0f55e0">精品</text>
<text x="571" y="498" font-family="Liberation Sans,sans-serif" font-weight="700" font-size="33" fill="#0f55e0" textLength="37" lengthAdjust="spacingAndGlyphs">EA</text>
<text x="493" y="521" font-family="Liberation Sans,sans-serif" font-weight="700" font-size="14.500" fill="#1f5fe0" textLength="135" lengthAdjust="spacing">eaclubshare.com</text>
</svg>
</div></body></html>
